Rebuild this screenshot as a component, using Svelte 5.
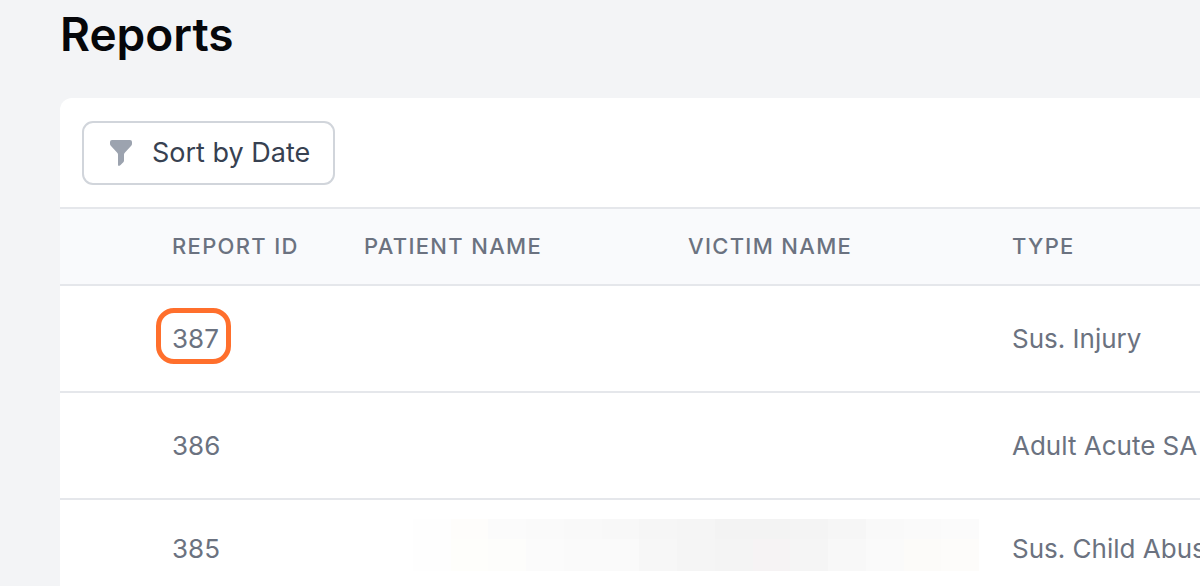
<script>
    const columns = ['Report ID', 'Patient Name', 'Victim Name', 'Type'];

    const reports = [
        { id: 387, type: 'Sus. Injury', selected: true },
        { id: 386, type: 'Adult Acute SA' },
        { id: 385, type: 'Sus. Child Abuse', redacted: true }
    ];

    // shades of the pixelated names, upper row then lower row
    const upper = ['#fefefe', '#fefdfb', '#fbfbfb', '#fafafa', '#f9f9f9', '#f8f8f8', '#f6f6f6', '#f5f5f5', '#f3f3f3', '#f3f3f3', '#f4f4f4', '#f6f6f6', '#f9f9f9', '#fafafa', '#fbfbfb'];
    const lower = ['#fefefe', '#fefefb', '#fdfdfb', '#fbfbfb', '#fafafa', '#fafafa', '#f7f7f7', '#f5f5f5', '#f4f4f4', '#f6f3f4', '#f5f5f5', '#f8f8f8', '#fafafa', '#fcfbf9', '#fdfcfa'];
</script>

<main>
    <h1>Reports</h1>

    <section class="panel">
        <div class="toolbar">
            <button type="button">
                <svg width="22" height="26" viewBox="0 0 22 26" aria-hidden="true">
                    <path d="M2 0h18q2 0 2 2v2q0 1-1 2l-6 6.500q-1 1-1 2v6q0 1-.7 1.700l-3 3q-2.300 1.800-2.300-.7v-10q0-1-1-2L1 6Q0 5 0 4V2q0-2 2-2z" fill="#9ca3af" />
                </svg>
                Sort by Date
            </button>
        </div>

        <table>
            <colgroup>
                <col class="col-select">
                <col class="col-id">
                <col class="col-name">
                <col class="col-name">
                <col>
            </colgroup>
            <thead>
                <tr>
                    <td></td>
                    {#each columns as column}
                        <th scope="col">{column}</th>
                    {/each}
                </tr>
            </thead>
            <tbody>
                {#each reports as report}
                    <tr class:redacted={report.redacted}>
                        <td></td>
                        <td><span class="id" class:selected={report.selected}>{report.id}</span></td>
                        {#if report.redacted}
                            <td class="names" colspan="2">
                                <div class="mosaic">
                                    {#each [...upper, ...lower] as shade}
                                        <i style="background: {shade}"></i>
                                    {/each}
                                </div>
                            </td>
                        {:else}
                            <td></td>
                            <td></td>
                        {/if}
                        <td>{report.type}</td>
                    </tr>
                {/each}
            </tbody>
        </table>
    </section>
</main>

<style>
    :global(body) {
        background: #f3f4f6;
        overflow: hidden;
    }

    main {
        padding: 4px 0 0 60px;
        font-family: Inter, "Liberation Sans", sans-serif;
        font-size: 26px;
        color: #6b7280;
    }

    h1 {
        margin: 0 0 34px;
        font-size: 46px;
        line-height: 60px;
        font-weight: 600;
        color: #06070a;
    }

    .panel {
        background: white;
        border-radius: 12px 0 0 0;
        overflow: hidden;
    }

    .toolbar {
        padding: 23px 22px 22px;
    }

    button {
        display: flex;
        align-items: center;
        gap: 20px;
        padding: 12px 23px 12px 26px;
        border: 2px solid #d1d5db;
        border-radius: 11px;
        background: white;
        color: #374151;
        font: inherit;
        font-size: 27px;
        line-height: 36px;
    }

    table {
        width: 100%;
        min-width: 1140px;
        table-layout: fixed;
        border-collapse: separate;
        border-spacing: 0;
    }

    .col-select {
        width: 90px;
    }

    .col-id {
        width: 192px;
    }

    .col-name {
        width: 324px;
    }

    th,
    td {
        padding: 0 22px;
        text-align: left;
        white-space: nowrap;
        vertical-align: middle;
    }

    thead th,
    thead td {
        height: 73px;
        padding-bottom: 2px;
        border-top: 2px solid #e5e7eb;
        border-bottom: 2px solid #e5e7eb;
        background: #f9fafc;
        font-size: 22px;
        font-weight: 500;
        letter-spacing: 0.06em;
        text-transform: uppercase;
    }

    tbody td {
        padding-top: 35px;
        padding-bottom: 34px;
        line-height: 36px;
        border-bottom: 2px solid #e5e7eb;
    }

    .redacted td {
        padding-top: 31px;
        padding-bottom: 29px;
    }

    .redacted .names {
        padding: 19px 11px 25px 71px;
    }

    .id {
        position: relative;
    }

    .selected::after {
        content: "";
        position: absolute;
        inset: -15px -12px -10px -16px;
        border: 5px solid #ff6f2c;
        border-radius: 18px;
    }

    .mosaic {
        display: grid;
        grid-template-columns: repeat(15, 1fr);
        grid-template-rows: 20px 32px;
    }
</style>
